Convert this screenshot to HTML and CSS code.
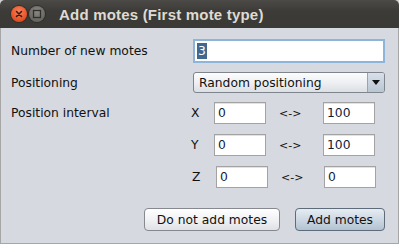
FILE: index.html
```html
<!DOCTYPE html>
<html>
<head>
<meta charset="utf-8">
<link rel="stylesheet" href="styles.css">
</head>
<body>
<div class="window">
  <div class="titlebar">
    <div class="wbtns">
      <span class="wbtn close"><svg width="16" height="16" viewBox="0 0 16 16"><path d="M5.5 5.5 L10.5 10.5 M10.5 5.5 L5.5 10.5" stroke="#3a1d12" stroke-width="1.6" stroke-linecap="round"/></svg></span>
      <span class="wbtn max"><svg width="16" height="16" viewBox="0 0 16 16"><rect x="4.5" y="4.5" width="7" height="7" fill="none" stroke="#2f2f2c" stroke-width="1.3"/></svg></span>
    </div>
    <div class="title">Add motes (First mote type)</div>
  </div>
  <div class="content">
    <div class="row r1">
      <span class="label">Number of new motes</span>
      <div class="field wide focus"><span class="sel">3</span></div>
    </div>
    <div class="row r2">
      <span class="label">Positioning</span>
      <div class="combo">
        <span class="combo-text">Random positioning</span>
        <span class="combo-arrow"><svg width="8" height="6" viewBox="0 0 8 6"><path d="M0 0 H8 L4 5 Z" fill="#111"/></svg></span>
      </div>
    </div>
    <div class="row coord">
      <span class="label clabel">Position interval</span>
      <span class="axis">X</span>
      <div class="field small">0</div>
      <span class="arrow">&lt;-&gt;</span>
      <div class="field small">100</div>
    </div>
    <div class="row coord">
      <span class="label clabel"></span>
      <span class="axis">Y</span>
      <div class="field small">0</div>
      <span class="arrow">&lt;-&gt;</span>
      <div class="field small">100</div>
    </div>
    <div class="row coord zrow">
      <span class="label clabel"></span>
      <span class="axis">Z</span>
      <div class="field small">0</div>
      <span class="arrow">&lt;-&gt;</span>
      <div class="field small">0</div>
    </div>
    <div class="buttons">
      <button class="btn no">Do not add motes</button>
      <button class="btn default">Add motes</button>
    </div>
  </div>
</div>
</body>
</html>
```
FILE: styles.css
```css
html, body {
  margin: 0;
  padding: 0;
  background: #d0d0d0;
}
body {
  width: 399px;
  height: 244px;
  overflow: hidden;
  font-family: "DejaVu Sans", sans-serif;
  font-size: 12.3px;
  color: #111;
}
.window {
  width: 399px;
  height: 244px;
  box-sizing: border-box;
  display: flex;
  flex-direction: column;
  border-radius: 5px 5px 0 0;
  overflow: hidden;
}
.titlebar {
  height: 28px;
  flex: none;
  background: linear-gradient(#4b4a46, #3c3b37 40%, #3a3935);
  display: flex;
  align-items: center;
  padding-left: 11px;
}
.wbtns {
  display: flex;
  gap: 2px;
}
.wbtn {
  width: 16px;
  height: 16px;
  border-radius: 50%;
  display: flex;
}
.close {
  background: radial-gradient(circle at 50% 35%, #f7845a, #e9542a 60%, #c8401c);
  box-shadow: 0 0 0 1px #2f2e2b;
}
.max {
  background: radial-gradient(circle at 50% 35%, #8a8984, #6b6a65 60%, #5b5a56);
  box-shadow: 0 0 0 1px #2f2e2b;
}
.title {
  margin-left: 14px;
  font-family: "Liberation Sans", sans-serif;
  font-weight: bold;
  font-size: 15px;
  color: #dfdbd2;
  letter-spacing: 0.2px;
}
.content {
  flex: 1;
  background: #d6d9df;
  border: 1px solid #a6a6a6;
  border-top: none;
  padding: 11px 13px 0 10px;
  display: flex;
  flex-direction: column;
}
.row {
  display: flex;
  align-items: center;
}
.label {
  width: 182px;
  flex: none;
}
.r1 { height: 24px; }
.r2 { height: 21px; margin-top: 9px; }
.coord { height: 22px; margin-top: 10px; }
.coord:nth-child(3) { margin-top: 9px; }
.clabel { width: 180px; }
.axis { width: 23px; flex: none; }
.zrow .axis { width: 25px; padding-left: 1px; box-sizing: border-box; }
.field {
  box-sizing: border-box;
  background: #fff;
  border: 1px solid #a3a3a3;
  box-shadow: inset 0 1px 0 #e2e2e2;
  height: 22px;
  display: flex;
  align-items: center;
  padding-left: 3px;
  color: #0d1a3a;
}
.wide {
  width: 192px;
  height: 24px;
}
.focus {
  border: 2px solid #8fb4d9;
  box-shadow: none;
  padding-left: 2px;
}
.sel {
  background: #41688f;
  color: #fff;
  height: 16px;
  line-height: 16px;
  padding: 0 1px;
}
.small { width: 52px; }
.arrow {
  width: 57px;
  flex: none;
  padding-left: 13px;
  box-sizing: border-box;
  font-size: 11px;
}
.zrow .small:last-child { margin-left: -1px; }
.combo {
  width: 192px;
  height: 21px;
  box-sizing: border-box;
  border: 1px solid #7f858d;
  border-radius: 3px;
  background: linear-gradient(#fdfdfd, #eceef1 55%, #dcdfe3);
  display: flex;
  overflow: hidden;
}
.combo-text {
  flex: 1;
  padding-left: 5px;
  display: flex;
  align-items: center;
}
.combo-arrow {
  width: 16px;
  border-left: 1px solid #9aa4ae;
  background: linear-gradient(#d8e0e8, #b9c6d3);
  display: flex;
  align-items: center;
  justify-content: center;
}
.buttons {
  margin-top: 20px;
  display: flex;
  justify-content: flex-end;
  gap: 15px;
}
.btn {
  font-family: "DejaVu Sans", sans-serif;
  font-size: 12.3px;
  color: #111;
  height: 23px;
  box-sizing: border-box;
  border: 1px solid #868a90;
  border-radius: 4px;
  background: linear-gradient(#ffffff, #f1f2f4 50%, #dfe1e5);
  padding: 0;
}
.no { width: 136px; }
.default {
  width: 90px;
  border-color: #5d6b7a;
  background: linear-gradient(#e6ecf2, #cdd8e3 50%, #b2c2d2);
}
```
